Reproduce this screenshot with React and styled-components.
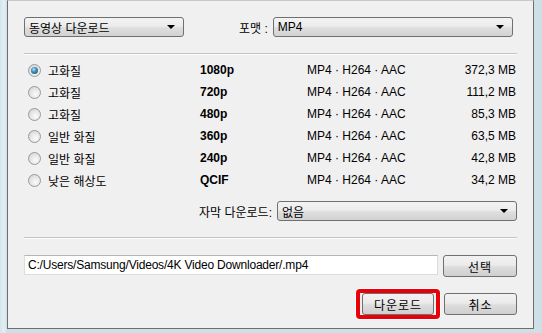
import React from "react";
import styled, { createGlobalStyle } from "styled-components";

const GlobalStyle = createGlobalStyle`
  html, body {
    margin: 0;
    padding: 0;
    background: #d9e8ee;
    width: 542px;
    height: 333px;
    overflow: hidden;
  }
  * { box-sizing: border-box; }
`;

const FONT = `"Liberation Sans", "Noto Sans CJK KR", sans-serif`;

const Frame = styled.div`
  width: 542px;
  height: 333px;
  padding-left: 7px;
  background: linear-gradient(90deg, #d2e6ec 0px, #e4eff3 4px, #cde0e8 7px);
`;

const Panel = styled.div`
  width: 527px;
  height: 329px;
  background: #f0f0f0;
  border: 1px solid #6e6e6e;
  border-top-color: #c9c9c9;
  padding: 16px 16px 0 16px;
  font-family: ${FONT};
  font-size: 12px;
  color: #000;
  display: flex;
  flex-direction: column;
`;

const TopRow = styled.div`
  display: flex;
  align-items: center;
  height: 20px;
`;

const Label = styled.span`
  margin-left: ${(p) => p.$ml || 0}px;
  margin-right: 5px;
  white-space: nowrap;
  letter-spacing: ${(p) => p.$ls || 0}px;
`;

const Select = styled.div`
  position: relative;
  width: ${(p) => p.$w}px;
  height: 20px;
  border: 1px solid #707070;
  border-radius: 3px;
  background: linear-gradient(#f3f3f3 0%, #ececec 45%, #dedede 55%, #d2d2d2 100%);
  display: flex;
  align-items: center;
  padding-left: 4px;
  white-space: nowrap;
  &::after {
    content: "";
    position: absolute;
    right: 8px;
    top: 7px;
    border-left: 4px solid transparent;
    border-right: 4px solid transparent;
    border-top: 4px solid #000;
  }
`;

const Separator = styled.div`
  height: 2px;
  margin-top: ${(p) => p.$mt}px;
  border-top: 1px solid #c4c4c4;
  border-bottom: 1px solid #fbfbfb;
`;

const List = styled.div`
  margin-top: 4px;
  display: flex;
  flex-direction: column;
`;

const Row = styled.div`
  display: grid;
  grid-template-columns: 176px 107px 1fr auto;
  align-items: center;
  height: 22px;
`;

const Choice = styled.div`
  display: flex;
  align-items: center;
  gap: 7px;
  padding-left: 4px;
`;

const Radio = styled.span`
  position: relative;
  width: 13px;
  height: 13px;
  border-radius: 50%;
  border: 1px solid #9a9a9a;
  background: radial-gradient(circle at 60% 65%, #fbfbfb 0%, #e4e4e4 55%, #c8c8c8 100%);
  &::after {
    content: "";
    display: ${(p) => (p.$checked ? "block" : "none")};
    position: absolute;
    left: 2px;
    top: 2px;
    width: 7px;
    height: 7px;
    border-radius: 50%;
    background: radial-gradient(circle at 40% 35%, #b6e4f4 0%, #3d8fb4 40%, #1b4c6b 100%);
  }
`;

const Res = styled.span`
  font-weight: bold;
`;

const Size = styled.span`
  text-align: right;
  padding-right: 1px;
`;

const SubRow = styled.div`
  display: flex;
  justify-content: flex-end;
  align-items: center;
  margin-top: 10px;
  height: 20px;
`;

const PathRow = styled.div`
  display: flex;
  gap: 5px;
  margin-top: 16px;
  align-items: flex-start;
`;

const PathInput = styled.div`
  flex: 1;
  height: 20px;
  background: #fff;
  border: 1px solid #dcdcdc;
  border-top-color: #b5b5b5;
  padding-left: 3px;
  display: flex;
  align-items: center;
  white-space: nowrap;
  letter-spacing: -0.2px;
`;

const Button = styled.div`
  width: ${(p) => p.$w || 73}px;
  height: 22px;
  border: 1px solid #707070;
  border-radius: 3px;
  background: linear-gradient(#f2f2f2 0%, #ebebeb 45%, #dddddd 55%, #cfcfcf 100%);
  display: flex;
  align-items: center;
  justify-content: center;
  letter-spacing: 1px;
`;

const ButtonRow = styled.div`
  display: flex;
  justify-content: flex-end;
  align-items: center;
  gap: 4px;
  margin-top: 12px;
`;

const Highlight = styled.div`
  border: 4px solid #e8000a;
  border-radius: 4px;
  padding: 0 2px;
  box-shadow: 0 0 0 1px #fff;
`;

const rows = [
  ["고화질", "1080p", "372,3 MB", true],
  ["고화질", "720p", "111,2 MB"],
  ["고화질", "480p", "85,3 MB"],
  ["일반 화질", "360p", "63,5 MB"],
  ["일반 화질", "240p", "42,8 MB"],
  ["낮은 해상도", "QCIF", "34,2 MB"],
];

export default function App() {
  return (
    <Frame>
      <GlobalStyle />
      <Panel>
        <TopRow>
          <Select $w={160}>동영상 다운로드</Select>
          <Label $ml={55}>포맷 :</Label>
          <Select $w={240}>MP4</Select>
        </TopRow>
        <Separator $mt={16} />
        <List>
          {rows.map(([name, res, size, checked], i) => (
            <Row key={i}>
              <Choice>
                <Radio $checked={checked} />
                <span>{name}</span>
              </Choice>
              <Res>{res}</Res>
              <span>MP4 · H264 · AAC</span>
              <Size>{size}</Size>
            </Row>
          ))}
        </List>
        <SubRow>
          <Label>자막 다운로드:</Label>
          <Select $w={240}>없음</Select>
        </SubRow>
        <Separator $mt={16} />
        <PathRow>
          <PathInput>C:/Users/Samsung/Videos/4K Video Downloader/.mp4</PathInput>
          <Button $w={74}>선택</Button>
        </PathRow>
        <ButtonRow>
          <Highlight>
            <Button $w={72}>다운로드</Button>
          </Highlight>
          <Button $w={73}>취소</Button>
        </ButtonRow>
      </Panel>
    </Frame>
  );
}
